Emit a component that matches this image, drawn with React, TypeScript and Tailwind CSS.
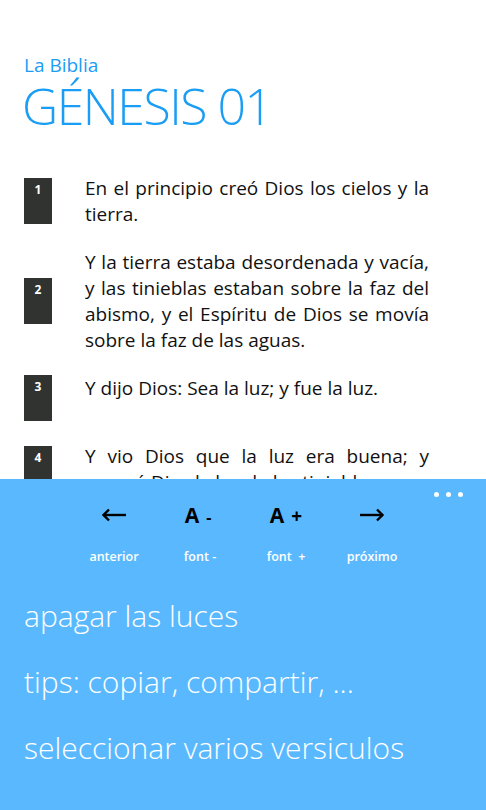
import React from "react";

const verses = [
  { n: 1, text: "En el principio creó Dios los cielos y la tierra." },
  {
    n: 2,
    text: "Y la tierra estaba desordenada y vacía, y las tinieblas estaban sobre la faz del abismo, y el Espíritu de Dios se movía sobre la faz de las aguas.",
  },
  { n: 3, text: "Y dijo Dios: Sea la luz; y fue la luz." },
  { n: 4, text: "Y vio Dios que la luz era buena; y separó Dios la luz de las tinieblas." },
];

const font = { fontFamily: '"Open Sans", "Noto Sans", sans-serif' };

function ArrowLeft() {
  return (
    <svg width="26" height="14" viewBox="0 0 26 14" fill="none" stroke="#000" strokeWidth="2.4">
      <path d="M2 7 H25" />
      <path d="M8 1.5 L2.5 7 L8 12.5" />
    </svg>
  );
}

function ArrowRight() {
  return (
    <svg width="26" height="14" viewBox="0 0 26 14" fill="none" stroke="#000" strokeWidth="2.4">
      <path d="M1 7 H24" />
      <path d="M18 1.5 L23.5 7 L18 12.5" />
    </svg>
  );
}

const buttons = [
  { key: "prev", icon: <ArrowLeft />, label: "anterior" },
  {
    key: "minus",
    icon: (
      <span className="text-[21px] font-bold text-black leading-none -ml-[4px]">
        A<span className="ml-[7px] text-[16px]">-</span>
      </span>
    ),
    label: "font -",
  },
  {
    key: "plus",
    icon: (
      <span className="text-[21px] font-bold text-black leading-none">
        A<span className="ml-[7px] text-[19px]">+</span>
      </span>
    ),
    label: "font  +",
  },
  { key: "next", icon: <ArrowRight />, label: "próximo" },
];

const menu = ["apagar las luces", "tips: copiar, compartir, ...", "seleccionar varios versiculos"];

export default function App() {
  return (
    <div className="relative w-[486px] h-[810px] overflow-hidden bg-white" style={font}>
      <div className="pt-[52px] pl-6">
        <div className="text-[19px] leading-[26px] text-[#1a9df4]">La Biblia</div>
        <div className="text-[50px] leading-[56px] font-light text-[#1a9df4] -ml-[2px] tracking-[-1.5px]">
          GÉNESIS 01
        </div>
      </div>

      <div className="mt-[41px] flex flex-col gap-[22px]">
        {verses.map((v) => (
          <div key={v.n} className="flex items-center">
            <div className="ml-6 w-[28px] h-[46px] shrink-0 bg-[#303330] text-white text-[12px] font-bold text-center pt-[3px]">
              {v.n}
            </div>
            <p className="ml-[33px] w-[344px] min-h-[46px] text-[19px] leading-[26px] text-[#111] text-justify">
              {v.text}
            </p>
          </div>
        ))}
      </div>

      {/* app bar, expanded over the verses */}
      <div className="absolute left-0 right-0 bottom-0 top-[479px] bg-[#5ab9fe]">
        <div className="absolute top-[13px] right-[23px] flex gap-[7px]">
          <span className="w-[5px] h-[5px] rounded-full bg-white" />
          <span className="w-[5px] h-[5px] rounded-full bg-white" />
          <span className="w-[5px] h-[5px] rounded-full bg-white" />
        </div>

        <div className="flex justify-center pt-[25px]">
          {buttons.map((b) => (
            <div key={b.key} className="w-[86px] flex flex-col items-center">
              <div className="h-[22px] flex items-center justify-center">{b.icon}</div>
              <div className="mt-[22px] text-[12.5px] leading-[18px] font-semibold text-white whitespace-pre">
                {b.label}
              </div>
            </div>
          ))}
        </div>

        <div className="mt-[30px] pl-[24px] flex flex-col gap-[26px]">
          {menu.map((m) => (
            <div key={m} className="text-[30px] leading-[40px] font-light text-white">
              {m}
            </div>
          ))}
        </div>
      </div>
    </div>
  );
}
